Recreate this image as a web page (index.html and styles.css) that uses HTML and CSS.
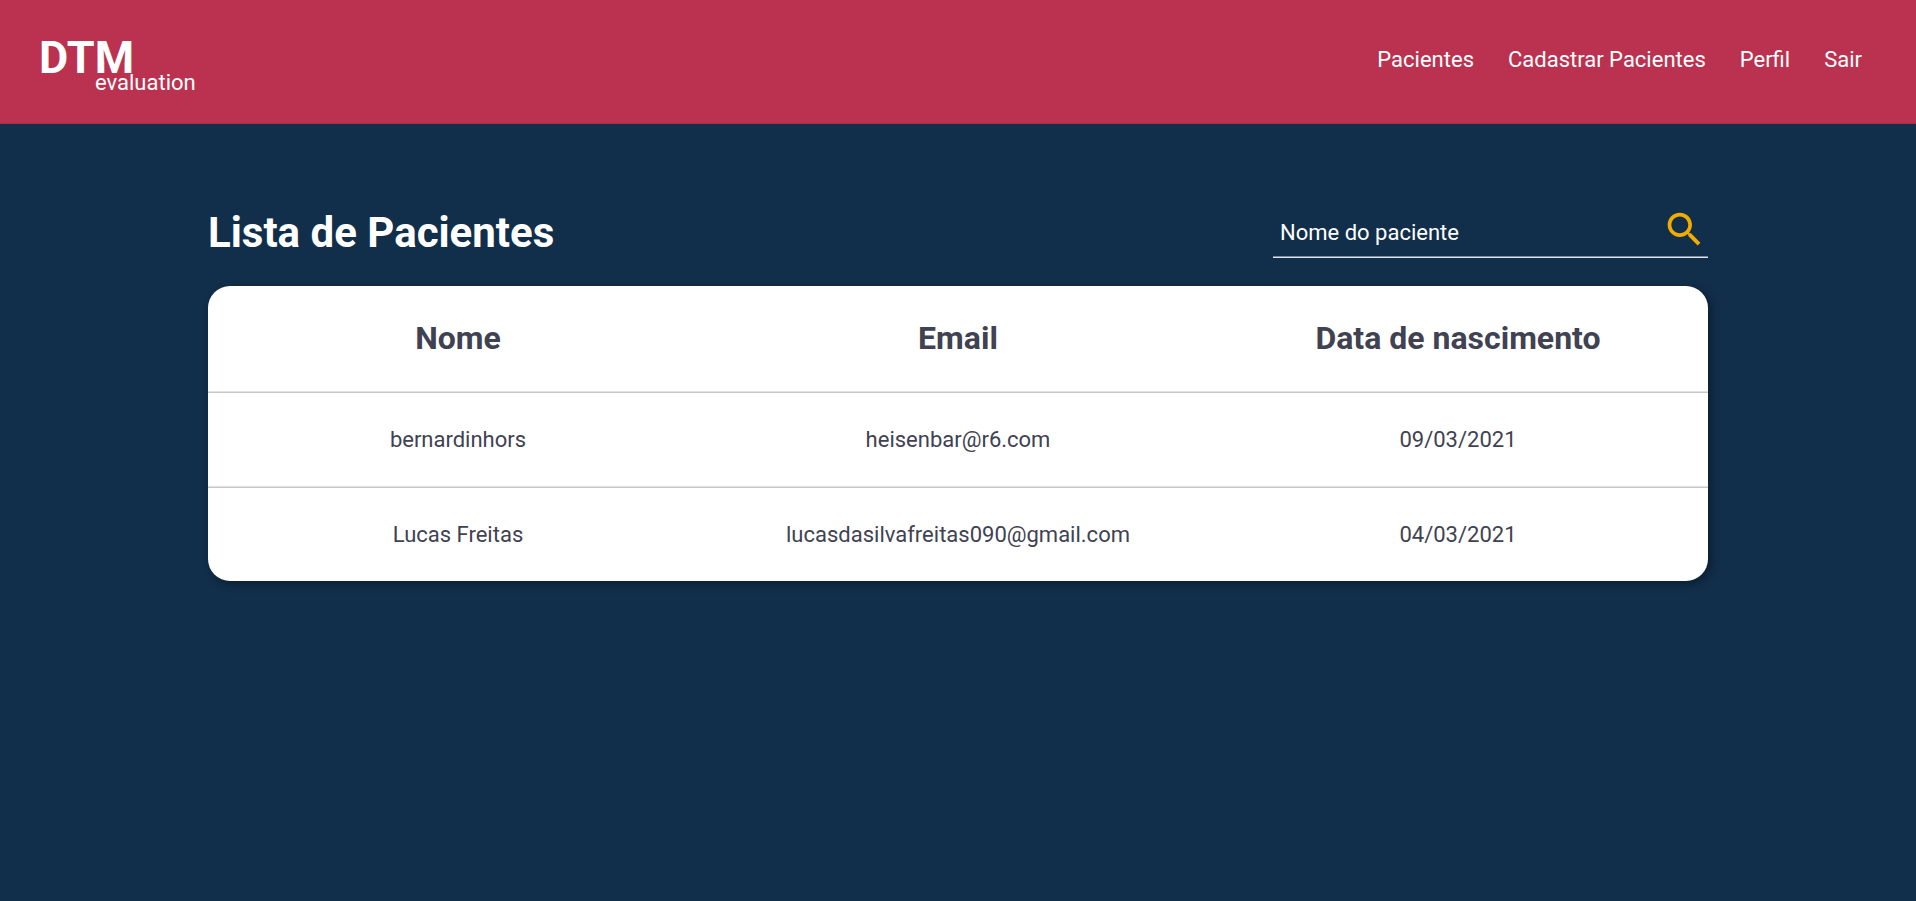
FILE: index.html
```html
<!DOCTYPE html>
<html lang="pt-BR">
<head>
  <meta charset="utf-8">
  <meta name="viewport" content="width=device-width, initial-scale=1">
  <title>DTM evaluation</title>
  <link rel="stylesheet" href="styles.css">
</head>
<body>
  <header class="header">
    <a class="logo" href="#">
      <span class="logo-main">DTM</span>
      <span class="logo-sub">evaluation</span>
    </a>
    <nav class="nav">
      <a class="nav-link" href="#">Pacientes</a>
      <a class="nav-link" href="#">Cadastrar Pacientes</a>
      <a class="nav-link" href="#">Perfil</a>
      <a class="nav-link" href="#">Sair</a>
    </nav>
  </header>
  <main class="content">
    <div class="toolbar">
      <h1 class="title">Lista de Pacientes</h1>
      <form class="search">
        <input class="search-input" type="text" placeholder="Nome do paciente" aria-label="Nome do paciente">
        <button class="search-button" type="button" aria-label="Buscar">
          <svg class="search-icon" viewBox="0 0 24 24" aria-hidden="true"><path d="M15.5 14h-.79l-.28-.27C15.41 12.59 16 11.11 16 9.5 16 5.91 13.09 3 9.5 3S3 5.91 3 9.5 5.91 16 9.5 16c1.61 0 3.09-.59 4.23-1.57l.27.28v.79l5 4.99L20.49 19l-4.99-5zm-6 0C7.01 14 5 11.99 5 9.5S7.01 5 9.5 5 14 7.01 14 9.5 11.99 14 9.5 14z"/></svg>
        </button>
      </form>
    </div>
    <table class="patients">
      <thead>
        <tr><th scope="col">Nome</th><th scope="col">Email</th><th scope="col">Data de nascimento</th></tr>
      </thead>
      <tbody>
        <tr><td>bernardinhors</td><td>heisenbar@r6.com</td><td>09/03/2021</td></tr>
        <tr><td>Lucas Freitas</td><td>lucasdasilvafreitas090@gmail.com</td><td>04/03/2021</td></tr>
      </tbody>
    </table>
  </main>
</body>
</html>
```
FILE: styles.css
```css
* {
  box-sizing: border-box;
}

body {
  margin: 0;
  min-height: 100vh;
  background: #112e4a;
  color: #fff;
  font-family: Roboto, "Liberation Sans", sans-serif;
  font-size: 22px;
  line-height: 25px;
}

.header {
  display: flex;
  justify-content: space-between;
  align-items: center;
  padding: 33px 54px 28px 39px;
  background: #ba324f;
  border-bottom: 1px solid #a92e4b;
}

.logo {
  display: flex;
  flex-direction: column;
  color: #fff;
  text-decoration: none;
}

.logo-main {
  font-size: 45px;
  font-weight: 700;
  line-height: 50px;
}

.logo-sub {
  margin: -13px 0 0 56px;
}

.nav {
  display: flex;
  flex-wrap: wrap;
  gap: 34px;
  padding-bottom: 10px;
}

.nav-link {
  color: #fff;
  text-decoration: none;
}

.content {
  max-width: 1500px;
  margin: 0 auto;
  padding-top: 83px;
}

.toolbar {
  display: flex;
  justify-content: space-between;
  align-items: center;
  margin-bottom: 28px;
}

.title {
  margin: 0;
  font-size: 42px;
  font-weight: 700;
  line-height: 50px;
}

.search {
  display: flex;
  width: 435px;
  border-bottom: 1px solid #e0e4ea;
  box-shadow: inset 0 -1px #7a8ba0;
}

.search-input {
  flex: 1;
  min-width: 0;
  padding: 0 7px;
  border: 0;
  outline: 0;
  background: transparent;
  color: #fff;
  font: inherit;
}

.search-input::placeholder {
  color: #fff;
  opacity: 1;
}

.search-button {
  padding: 0 1px 5px 0;
  border: 0;
  background: transparent;
  cursor: pointer;
}

.search-icon {
  display: block;
  width: 45px;
  height: 45px;
  fill: #f2ab00;
}

.patients {
  width: 100%;
  table-layout: fixed;
  border-spacing: 0;
  border-radius: 22px;
  overflow: hidden;
  background: #fff;
  color: #404252;
  text-align: center;
  box-shadow: 3px 3px 8px rgba(0, 0, 0, 0.35);
}

.patients th,
.patients td {
  padding: 34px 0;
}

.patients th {
  font-size: 32px;
  font-weight: 700;
  line-height: 37px;
}

.patients thead th,
.patients tbody tr:not(:last-child) td {
  border-bottom: 1px solid #c8c8c8;
  padding-bottom: 35px;
  box-shadow: inset 0 -1px #e2e2e2;
}
```
